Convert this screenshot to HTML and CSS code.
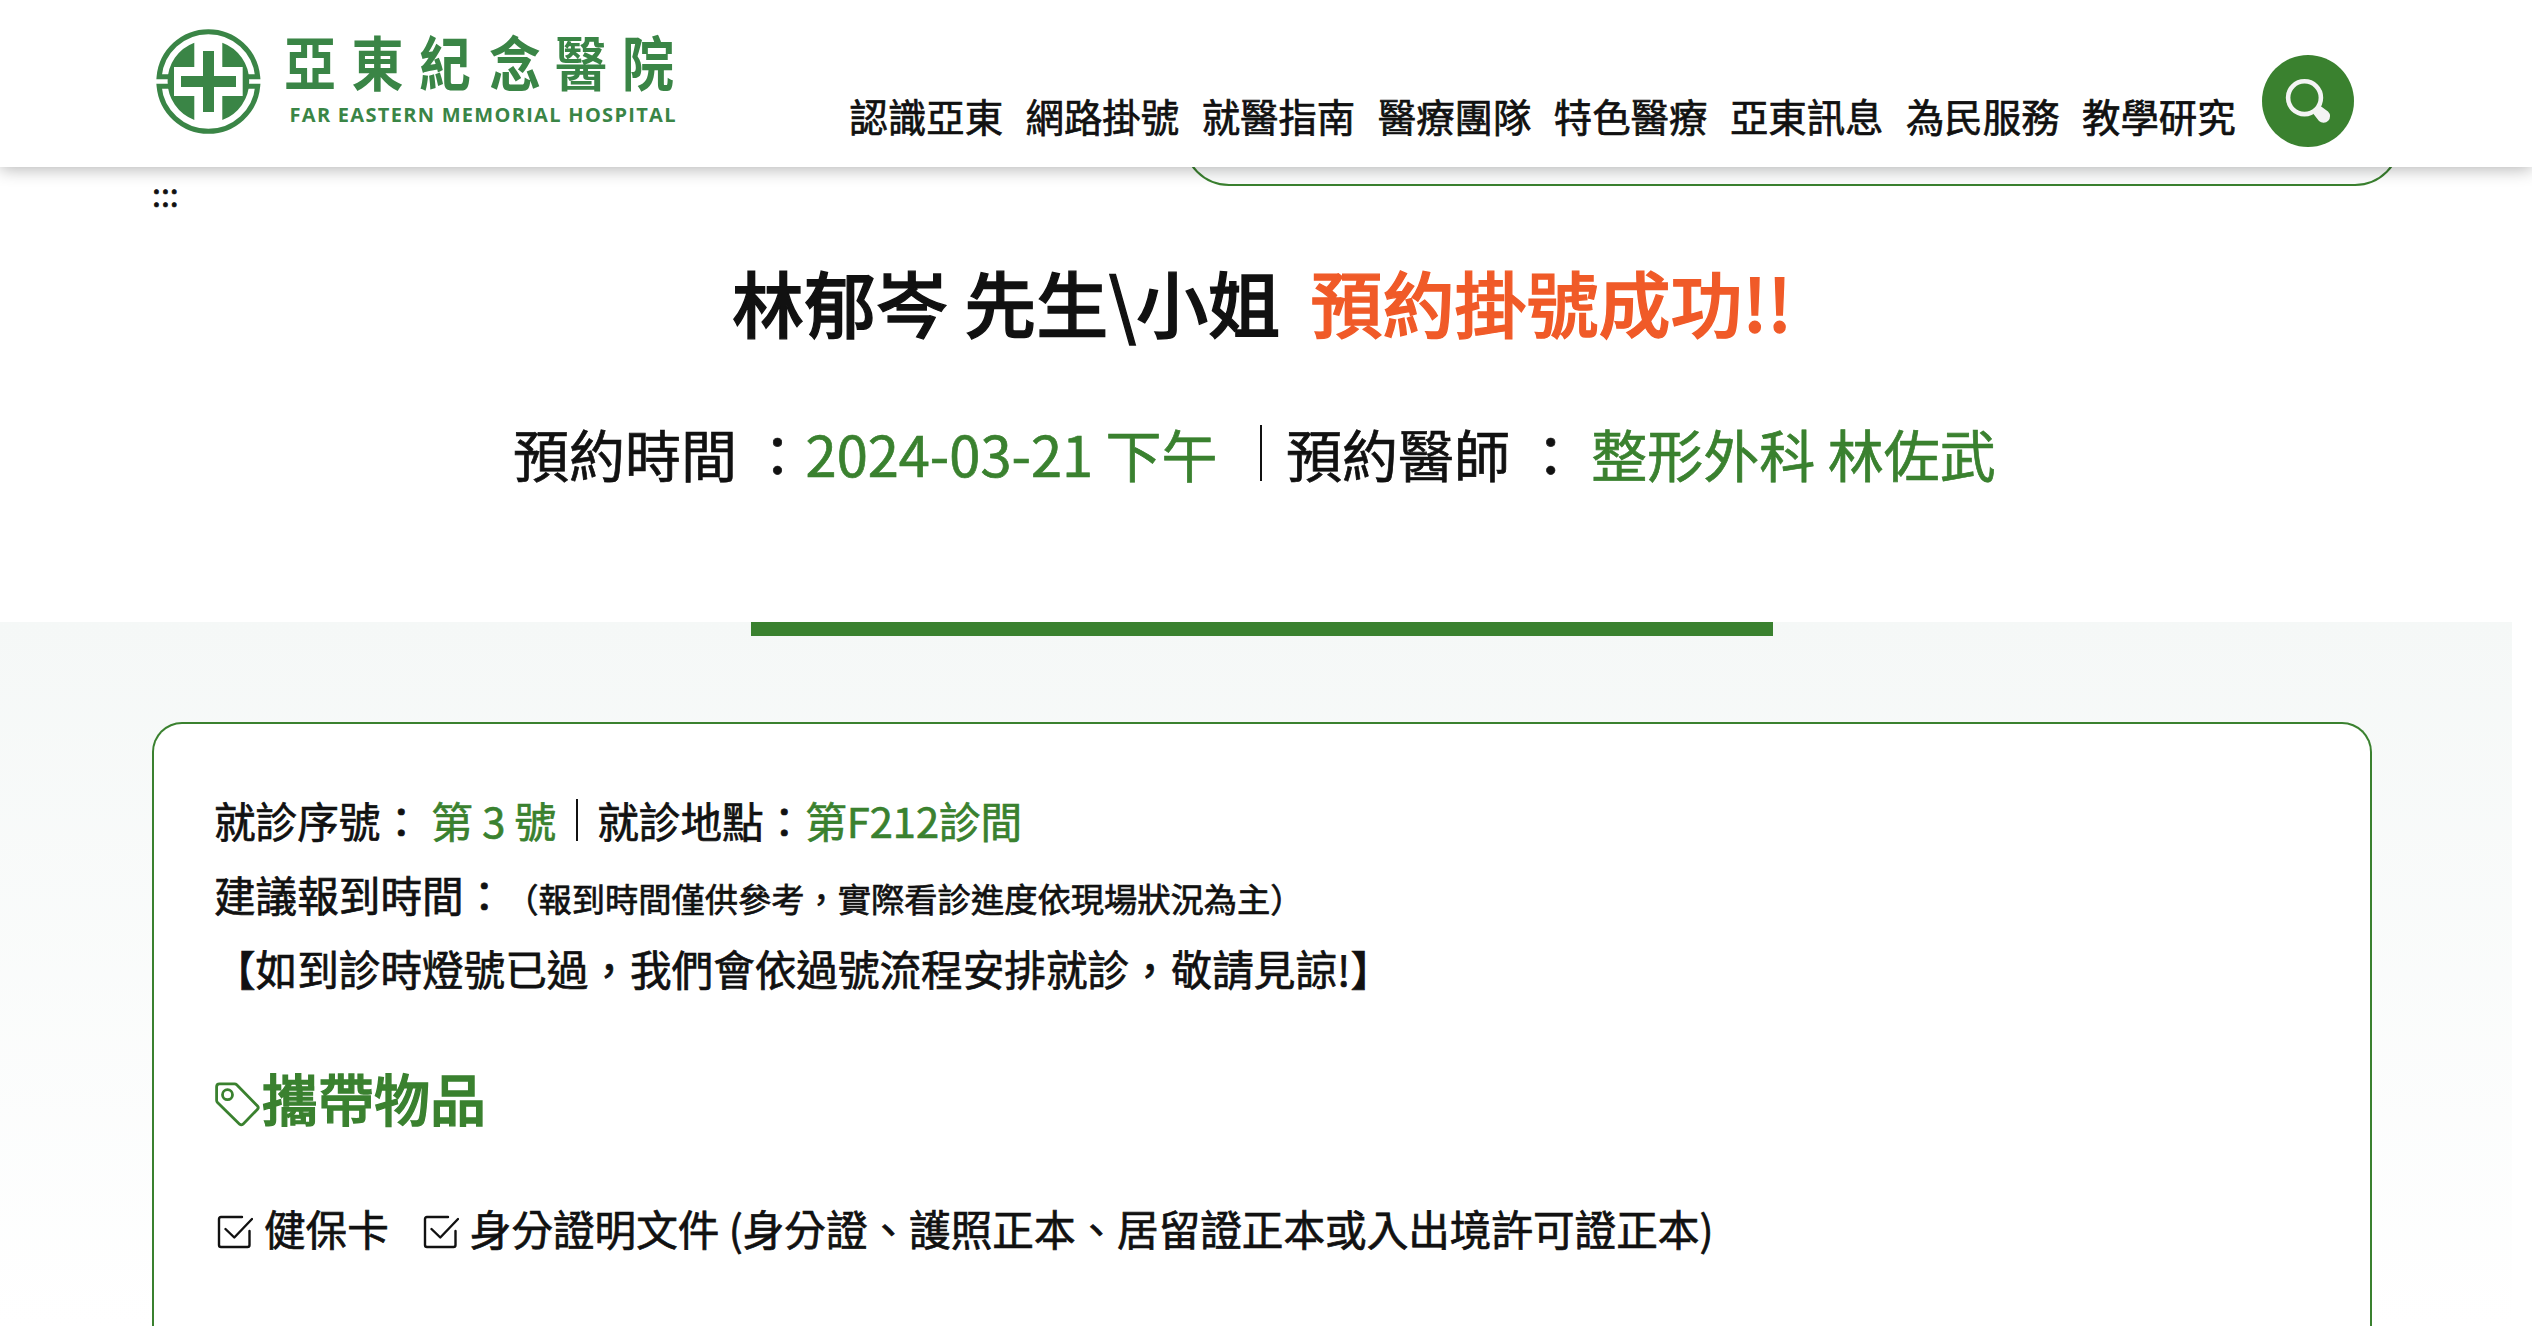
FILE: index.html
```
<!DOCTYPE html>
<html lang="zh-Hant">
<head>
<meta charset="utf-8">
<title>亞東紀念醫院</title>
<link rel="stylesheet" href="styles.css">
</head>
<body>
<header class="site-header">
  <svg class="logo" viewBox="0 0 530 110" role="img" aria-label="亞東紀念醫院">
    <g fill="none" stroke="#3a8546" stroke-width="5">
      <path d="M13 49.700H3.100A49.500 49.500 0 0 1 101.700 49.700H92"/>
      <path d="M13 59.300H3.100A49.500 49.500 0 0 0 101.700 59.300H92"/>
    </g>
    <path class="mark" d="M38.300 15.700V40H18V69H38.300V93A41 41 0 0 1 11.600 54.300 41 41 0 0 1 38.300 15.700Z"/>
    <path class="mark" d="M66.300 15.700V40H86.700V69H66.300V93A41 41 0 0 0 93.200 54.300 41 41 0 0 0 66.300 15.700Z"/>
    <path class="mark" d="M47 24H58V49H80V60H58V85H47V60H25V49H47Z"/>
    <text class="logo-name" transform="scale(1 1.130)" y="52.500" x="128 195.500 263 333 399 466">亞東紀念醫院</text>
    <text class="logo-sub" x="133.500" y="95" textLength="386">FAR EASTERN MEMORIAL HOSPITAL</text>
  </svg>
  <nav class="nav">
    <a>認識亞東</a><a>網路掛號</a><a>就醫指南</a><a>醫療團隊</a><a>特色醫療</a><a>亞東訊息</a><a>為民服務</a><a>教學研究</a>
  </nav>
  <button class="search" aria-label="搜尋">
    <svg viewBox="0 0 92 92">
      <circle cx="42.500" cy="42.700" r="16.400" fill="none" stroke="#f4f4f4" stroke-width="4.600"/>
      <path d="M53 53L58.500 51L66 56.500A6.500 6.500 0 0 1 57 66L51.500 59Z" fill="#f4f4f4"/>
    </svg>
  </button>
</header>
<main>
  <div class="top-strip">
    <span class="skip">:::</span>
    <div class="previous-card"></div>
  </div>
  <h1 class="title">林郁岑 先生\小姐 <span class="success">預約掛號成功!!</span></h1>
  <p class="summary">
    <span>預約時間 ：<b>2024-03-21 下午</b></span>
    <span class="second">預約醫師 ： <b>整形外科 林佐武</b></span>
  </p>
  <section class="details">
    <div class="accent"></div>
    <div class="card">
      <p class="line"><span>就診序號： <b>第 3 號</b></span><span class="place">就診地點：<b>第F212診間</b></span></p>
      <p class="line">建議報到時間：<small>（報到時間僅供參考，實際看診進度依現場狀況為主）</small></p>
      <p class="line">【如到診時燈號已過，我們會依過號流程安排就診，敬請見諒!】</p>
      <h2 class="bring">
        <svg class="tag" viewBox="0 0 46 46" fill="none" stroke="#3a812f" stroke-width="2.800">
          <path d="M5.500 2.800H20.500Q21.800 2.800 22.700 3.700L43.500 25Q45 26.700 43.500 28.300L29 43.200Q27.300 44.600 25.600 43.200L3.500 21.500Q2.600 20.600 2.600 19.300V5.700Q2.600 2.800 5.500 2.800Z"/>
          <circle cx="13.500" cy="13.700" r="5"/>
        </svg>攜帶物品
      </h2>
      <ul class="items">
        <li><svg class="check" viewBox="0 0 36 34"><path d="M25 2H4Q2 2 2 4V30Q2 32 4 32H30.500Q32.500 32 32.500 30V16M8.500 14L17.300 22.500L35 4"/></svg>健保卡</li>
        <li><svg class="check" viewBox="0 0 36 34"><path d="M25 2H4Q2 2 2 4V30Q2 32 4 32H30.500Q32.500 32 32.500 30V16M8.500 14L17.300 22.500L35 4"/></svg>身分證明文件 (身分證、護照正本、居留證正本或入出境許可證正本)</li>
      </ul>
    </div>
  </section>
</main>
</body>
</html>
```

FILE: styles.css
```
* { box-sizing: border-box; }
html, body { height: 100%; }
body {
  margin: 0;
  overflow: hidden;
  background: #fff;
  color: #111;
  font-family: "Noto Sans CJK TC", sans-serif;
  font-weight: 400;
  -webkit-text-stroke: .7px currentColor;
}
h1, h2, p, ul { margin: 0; padding: 0; }
b { font-weight: 400; color: #3a812f; }

.site-header {
  position: relative;
  z-index: 2;
  display: flex;
  align-items: flex-start;
  height: 167px;
  padding-left: 156px;
  background: #fff;
  box-shadow: 0 2px 16px rgba(0, 0, 0, .3);
}
.logo { width: 530px; height: 110px; margin-top: 27px; flex: none; overflow: visible; }
.mark, .logo-name, .logo-sub { fill: #3a8546; }
.logo-name { font-size: 52px; font-weight: 700; -webkit-text-stroke: 0; }
.logo-sub { font: bold 20px "Open Sans", sans-serif; -webkit-text-stroke: .4px #3a8546; }
.nav {
  display: flex;
  gap: 22.500px;
  margin: 87px 0 0 163.500px;
  font-size: 38.400px;
  line-height: 56px;
  white-space: nowrap;
}
.search {
  width: 92px;
  height: 92px;
  margin: 55px 0 0 26px;
  padding: 0;
  border: 0;
  border-radius: 50%;
  background: #3a812f;
  flex: none;
}
.search svg { display: block; width: 92px; height: 92px; }

.top-strip { display: flex; height: 60px; padding-left: 152px; }
.skip { width: 1031px; font-size: 32px; line-height: 52px; }
.previous-card {
  width: 1218px;
  height: 100px;
  margin-top: -81px;
  border: 2px solid #3a812f;
  border-radius: 46px;
  background: #fcfdfd;
}
.title {
  height: 150px;
  padding-left: 732px;
  font-size: 72px;
  font-weight: 500;
  line-height: 148px;
  white-space: nowrap;
  -webkit-text-stroke-width: 1.300px;
}
.success { margin-left: 14px; color: #f05a28; -webkit-text-stroke-color: #f05a28; }
.summary {
  display: flex;
  height: 245px;
  padding: 48px 0 0 513px;
  font-size: 56px;
  line-height: 55px;
  white-space: nowrap;
}
.summary .second {
  height: 56px;
  margin-left: 42px;
  padding-left: 24.500px;
  border-left: 2px solid #111;
}
.details {
  width: 2512px;
  height: 704px;
  padding-left: 152px;
  background: linear-gradient(#f5f8f7, #fff);
}
.accent { width: 1022px; height: 14px; margin-left: 599px; background: #3a812f; }
.card {
  width: 2220px;
  height: 604px;
  margin-top: 86px;
  padding: 59px 60px 0;
  border: 2px solid #3a812f;
  border-bottom: 0;
  border-radius: 30px 30px 0 0;
  background: #fff;
}
.line {
  display: flex;
  align-items: baseline;
  height: 74px;
  font-size: 41.600px;
  line-height: 74px;
  white-space: nowrap;
}
.line small { font-size: 33.280px; }
.place {
  margin-left: 20px;
  padding-left: 19px;
  line-height: 42px;
  border-left: 2px solid #111;
}
.bring {
  display: flex;
  align-items: center;
  height: 80px;
  margin-top: 51px;
  color: #3a812f;
  font-size: 56px;
  font-weight: 500;
  -webkit-text-stroke-width: 1.300px;
}
.tag { width: 46px; height: 46px; margin: 16px 2px 0 0; }
.items {
  display: flex;
  gap: 31px;
  margin-top: 62px;
  list-style: none;
  font-size: 41.600px;
  line-height: 60px;
  white-space: nowrap;
}
.items li { display: flex; align-items: center; }
.check {
  width: 36px;
  height: 34px;
  margin: 8px 11px 0 3px;
  fill: none;
  stroke: #111;
  stroke-width: 2.400;
  stroke-linecap: round;
  stroke-linejoin: round;
}
```
